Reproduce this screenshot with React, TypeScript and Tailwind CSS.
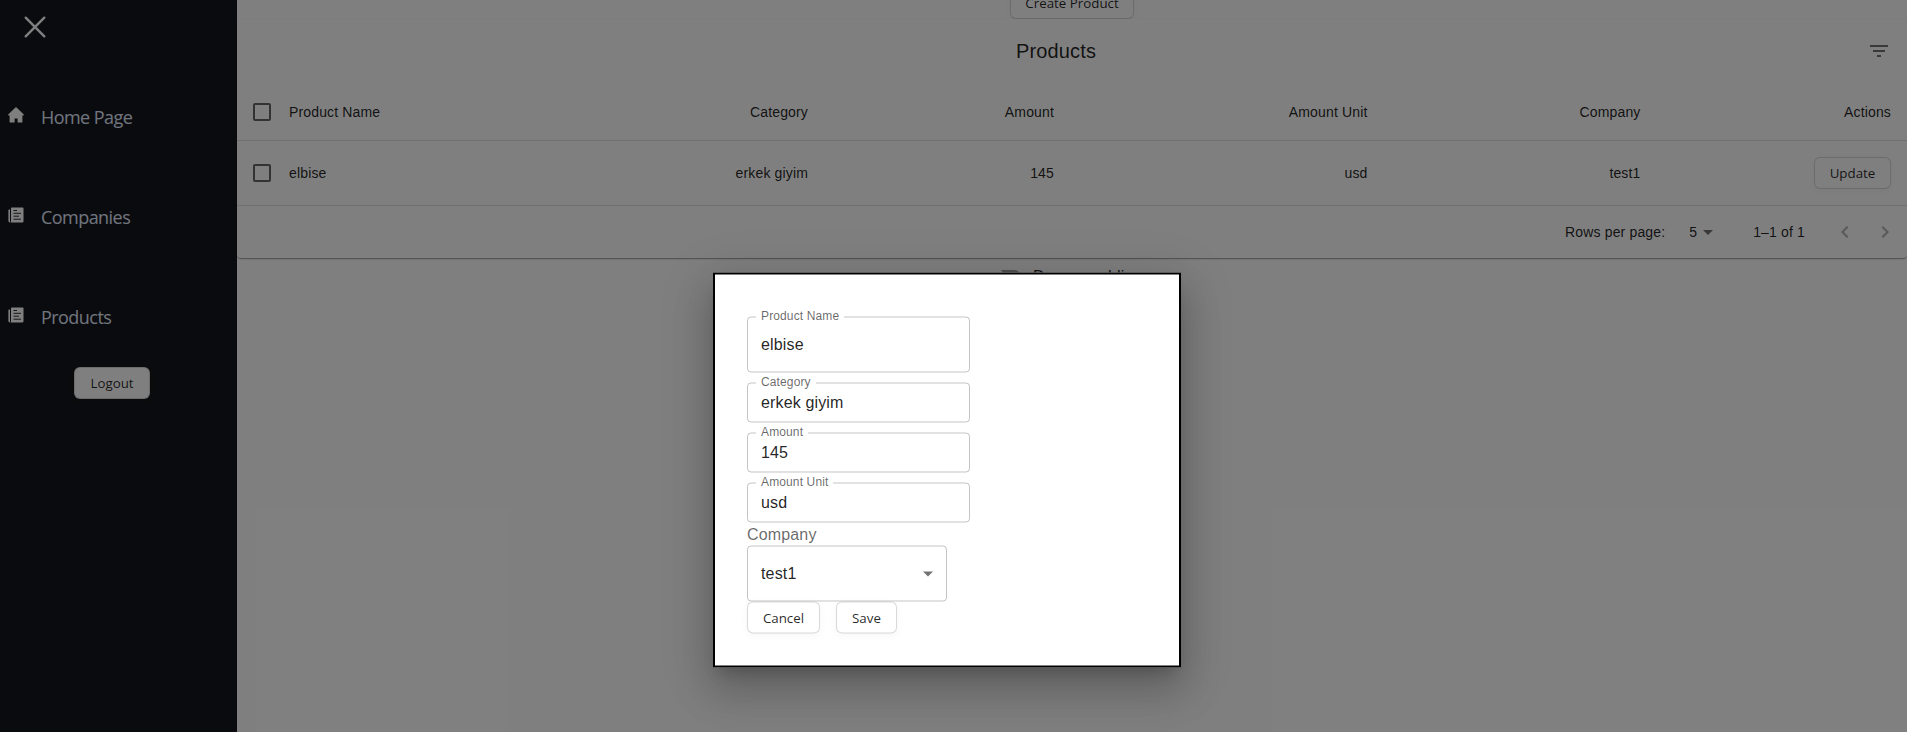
import React from "react";
import {
  MdArrowDropDown,
  MdCheckBoxOutlineBlank,
  MdFilterList,
  MdKeyboardArrowLeft,
  MdKeyboardArrowRight,
} from "react-icons/md";

const arial = "font-['Liberation_Sans',Arial,sans-serif]";
const open = "font-['Open_Sans','Noto_Sans',sans-serif]";

function Button({ children, className = "" }: { children: React.ReactNode; className?: string }) {
  return (
    <button
      className={`${open} flex h-8 shrink-0 items-center justify-center whitespace-nowrap rounded-md border border-black/15 bg-white pt-0.5 text-[13.33px] text-black/85 shadow-[0_2px_8px_rgba(0,0,0,0.04)] ${className}`}
    >
      {children}
    </button>
  );
}

function HomeIcon() {
  return (
    <svg viewBox="0 0 16 16" className="block size-4" fill="white">
      <path d="M8 0 L15.6 7.2 Q16 7.7 15.7 8.4 H14.4 V15 Q14.4 15.6 13.8 15.6 H9.6 V11.4 H6.6 V15.6 H2.2 Q1.6 15.6 1.6 15 V8.4 H0.3 Q0 7.7 0.4 7.2 Z" />
    </svg>
  );
}

function PaperIcon() {
  return (
    <svg viewBox="0 0 16 16" className="block size-4">
      <path d="M2 2.6 H1.2 Q0.4 2.6 0.4 3.6 V14 Q0.4 15.3 2 15.4 Z" fill="white" />
      <path d="M3 1.2 Q3 0.5 3.8 0.5 H14.7 Q15.5 0.5 15.5 1.3 V14.6 Q15.5 15.4 14.7 15.4 H2.4 Q3 15 3 14 Z" fill="white" />
      <path d="M5.5 3.5 H9 M5.5 6.3 H13 M5.5 9.2 H11 M5.5 12.2 H13" stroke="#15171c" strokeWidth="0.9" />
    </svg>
  );
}

function NavItem({ icon, label }: { icon: React.ReactNode; label: string }) {
  return (
    <li className="flex h-[100px] items-center pl-2">
      <span className="mb-1.5 w-4">{icon}</span>
      <span className="mb-0.5 ml-[17px] whitespace-nowrap text-[18px] tracking-[-0.55px] text-[#e1e9fc]">{label}</span>
    </li>
  );
}

function Field({ label, value, height }: { label: string; value: string; height: string }) {
  return (
    <div className={`relative mt-2.5 flex w-[223px] items-center pl-3.5 ${height}`}>
      <span className="text-base tracking-[0.15px]">{value}</span>
      <fieldset className="absolute inset-x-0 -top-[5px] bottom-0 min-w-0 rounded border border-black/[0.23] px-2">
        <legend className="h-[11px] whitespace-nowrap px-[5px] text-xs leading-[9px] tracking-[0.13px] text-black/60">
          {label}
        </legend>
      </fieldset>
    </div>
  );
}

const columns = "grid grid-cols-[52px_535px_246px_313.5px_273px_250.5px] items-center border-b border-[#e0e0e0] text-sm tracking-[0.15px]";

function Row({ cells, height }: { cells: React.ReactNode[]; height: string }) {
  return (
    <div className={`${columns} ${height}`}>
      <MdCheckBoxOutlineBlank className="ml-[13px] size-6 text-black/60" />
      {cells.map((cell, i) =>
        i === 0 ? (
          <div key={i} className="flex justify-between pr-4">
            {cell}
            <span>{cells[1]}</span>
          </div>
        ) : i === 1 ? null : (
          <div key={i} className="flex justify-end pr-4">
            {cell}
          </div>
        ),
      )}
    </div>
  );
}

export default function App() {
  return (
    <div className={`relative flex h-[732px] w-full overflow-hidden bg-white text-black/[0.87] ${arial}`}>
      <nav className={`flex w-[237px] shrink-0 flex-col bg-[#15171c] ${open}`}>
        <div className="flex h-[68px] pl-5 pt-3">
          <svg viewBox="0 0 30 30" className="size-[30px]" fill="none" stroke="white" strokeWidth="2.4" strokeLinecap="round">
            <path d="M5.7 5.7 L24.3 24.3 M24.3 5.7 L5.7 24.3" />
          </svg>
        </div>
        <ul>
          <NavItem icon={<HomeIcon />} label="Home Page" />
          <NavItem icon={<PaperIcon />} label="Companies" />
          <NavItem icon={<PaperIcon />} label="Products" />
        </ul>
        <Button className="ml-[74px] -mt-px w-[76px]">Logout</Button>
      </nav>

      <main className="flex min-w-0 flex-1 flex-col">
        <div className="flex h-[19px] items-end justify-center">
          <Button className="w-[124px]">Create Product</Button>
        </div>
        <section className="rounded bg-white shadow-[0_2px_1px_-1px_rgba(0,0,0,0.2),0_1px_1px_0_rgba(0,0,0,0.14),0_1px_3px_0_rgba(0,0,0,0.12)]">
          <div className="flex h-16 items-center pl-4 pr-2">
            <h6 className="flex-1 text-center text-xl tracking-[0.15px]">Products</h6>
            <span className="flex size-10 items-center justify-center">
              <MdFilterList className="size-6 text-black/55" />
            </span>
          </div>
          <Row height="h-[58px]" cells={["Product Name", "Category", "Amount", "Amount Unit", "Company", "Actions"]} />
          <Row
            height="h-[65px]"
            cells={["elbise", "erkek giyim", "145", "usd", "test1", <Button key="u" className="w-[77px] tracking-normal">Update</Button>]}
          />
          <div className="flex h-[52px] items-center justify-end pr-0.5 text-sm tracking-[0.15px]">
            <span>Rows per page:</span>
            <span className="ml-6">5</span>
            <MdArrowDropDown className="-ml-px size-6 text-black/55" />
            <span className="ml-[33px]">1–1 of 1</span>
            <span className="ml-5 flex size-10 items-center justify-center">
              <MdKeyboardArrowLeft className="size-6 text-black/30" />
            </span>
            <span className="flex size-10 items-center justify-center">
              <MdKeyboardArrowRight className="size-6 text-black/30" />
            </span>
          </div>
        </section>
        <label className="ml-[738px] flex h-[38px] items-center">
          <span className="relative ml-3 mr-3 h-[14px] w-[34px] rounded-[7px] bg-black/[0.38]">
            <span className="absolute -left-[3px] -top-[3px] size-5 rounded-full bg-white shadow-[0_1px_1px_rgba(0,0,0,0.14)]" />
          </span>
          <span className="text-base tracking-[0.15px]">Dense padding</span>
        </label>
      </main>

      <div className="absolute inset-0 bg-black/50" />

      <div
        role="dialog"
        className="absolute left-[713px] top-[470px] flex h-[395px] w-[468px] -translate-y-1/2 flex-col border-2 border-black bg-white p-8 shadow-[0_11px_15px_-7px_rgba(0,0,0,0.2),0_24px_38px_3px_rgba(0,0,0,0.14),0_9px_46px_8px_rgba(0,0,0,0.12)]"
      >
        <Field label="Product Name" value="elbise" height="h-14" />
        <Field label="Category" value="erkek giyim" height="h-10" />
        <Field label="Amount" value="145" height="h-10" />
        <Field label="Amount Unit" value="usd" height="h-10" />
        <div className="h-[23px] text-base leading-[23px] tracking-[0.15px] text-black/60">Company</div>
        <div className="flex h-14 w-[200px] items-center justify-between rounded border border-black/[0.23] pl-[13px] pr-1.5">
          <span className="tracking-[0.15px]">test1</span>
          <MdArrowDropDown className="size-6 text-black/55" />
        </div>
        <div className="flex gap-4">
          <Button className="w-[73px]">Cancel</Button>
          <Button className="w-[61px]">Save</Button>
        </div>
      </div>
    </div>
  );
}
